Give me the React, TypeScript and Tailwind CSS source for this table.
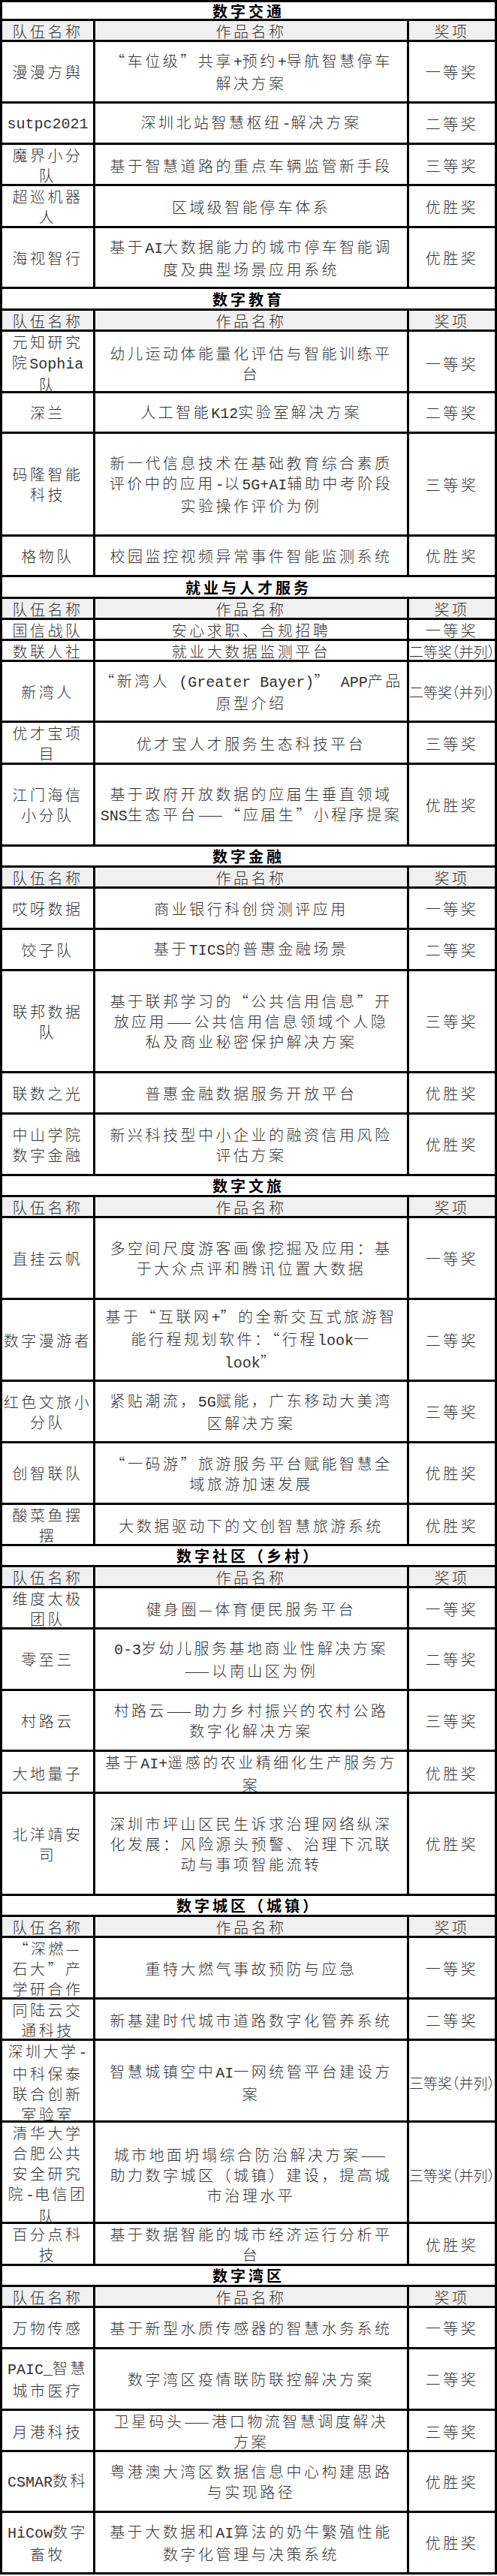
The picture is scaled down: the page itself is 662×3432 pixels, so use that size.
type Row = { team: string; work: string; award: string; h: number };
type Section = { title: string; titleH: number; rows: Row[] };

const sections: Section[] = [
  {
    title: "数字交通",
    titleH: 25,
    rows: [
      { team: "漫漫方舆", work: "“车位级”共享+预约+导航智慧停车\n解决方案", award: "一等奖", h: 82 },
      { team: "sutpc2021", work: "深圳北站智慧枢纽-解决方案", award: "二等奖", h: 55 },
      { team: "魔界小分\n队", work: "基于智慧道路的重点车辆监管新手段", award: "三等奖", h: 55 },
      { team: "超巡机器\n人", work: "区域级智能停车体系", award: "优胜奖", h: 56 },
      { team: "海视智行", work: "基于AI大数据能力的城市停车智能调\n度及典型场景应用系统", award: "优胜奖", h: 81 },
    ],
  },
  {
    title: "数字教育",
    titleH: 29,
    rows: [
      { team: "元知研究\n院Sophia\n队", work: "幼儿运动体能量化评估与智能训练平\n台", award: "一等奖", h: 82 },
      { team: "深兰", work: "人工智能K12实验室解决方案", award: "二等奖", h: 54 },
      {
        team: "码隆智能\n科技",
        work: "新一代信息技术在基础教育综合素质\n评价中的应用-以5G+AI辅助中考阶段\n实验操作评价为例",
        award: "三等奖",
        h: 137,
      },
      { team: "格物队", work: "校园监控视频异常事件智能监测系统", award: "优胜奖", h: 54 },
    ],
  },
  {
    title: "就业与人才服务",
    titleH: 29,
    rows: [
      { team: "国信战队", work: "安心求职、合规招聘", award: "一等奖", h: 28 },
      { team: "数联人社", work: "就业大数据监测平台", award: "二等奖（并列）", h: 28 },
      { team: "新湾人", work: "“新湾人 (Greater Bayer)” APP产品\n原型介绍", award: "二等奖（并列）", h: 81 },
      { team: "优才宝项\n目", work: "优才宝人才服务生态科技平台", award: "三等奖", h: 56 },
      {
        team: "江门海信\n小分队",
        work: "基于政府开放数据的应届生垂直领域\nSNS生态平台——“应届生”小程序提案",
        award: "优胜奖",
        h: 109,
      },
    ],
  },
  {
    title: "数字金融",
    titleH: 28,
    rows: [
      { team: "哎呀数据", work: "商业银行科创贷测评应用", award: "一等奖", h: 55 },
      { team: "饺子队", work: "基于TICS的普惠金融场景", award: "二等奖", h: 55 },
      {
        team: "联邦数据\n队",
        work: "基于联邦学习的“公共信用信息”开\n放应用——公共信用信息领域个人隐\n私及商业秘密保护解决方案",
        award: "三等奖",
        h: 136,
      },
      { team: "联数之光", work: "普惠金融数据服务开放平台", award: "优胜奖", h: 55 },
      { team: "中山学院\n数字金融", work: "新兴科技型中小企业的融资信用风险\n评估方案", award: "优胜奖", h: 82 },
    ],
  },
  {
    title: "数字文旅",
    titleH: 28,
    rows: [
      { team: "直挂云帆", work: "多空间尺度游客画像挖掘及应用：基\n于大众点评和腾讯位置大数据", award: "一等奖", h: 109 },
      {
        team: "数字漫游者",
        work: "基于“互联网+”的全新交互式旅游智\n能行程规划软件：“行程look一\nlook”",
        award: "二等奖",
        h: 109,
      },
      { team: "红色文旅小\n分队", work: "紧贴潮流，5G赋能，广东移动大美湾\n区解决方案", award: "三等奖", h: 82 },
      { team: "创智联队", work: "“一码游”旅游服务平台赋能智慧全\n域旅游加速发展", award: "优胜奖", h: 82 },
      { team: "酸菜鱼摆\n摆", work: "大数据驱动下的文创智慧旅游系统", award: "优胜奖", h: 55 },
    ],
  },
  {
    title: "数字社区（乡村）",
    titleH: 28,
    rows: [
      { team: "维度太极\n团队", work: "健身圈—体育便民服务平台", award: "一等奖", h: 55 },
      { team: "零至三", work: "0-3岁幼儿服务基地商业性解决方案\n——以南山区为例", award: "二等奖", h: 82 },
      { team: "村路云", work: "村路云——助力乡村振兴的农村公路\n数字化解决方案", award: "三等奖", h: 81 },
      { team: "大地量子", work: "基于AI+遥感的农业精细化生产服务方\n案", award: "优胜奖", h: 56 },
      {
        team: "北洋靖安\n司",
        work: "深圳市坪山区民生诉求治理网络纵深\n化发展：风险源头预警、治理下沉联\n动与事项智能流转",
        award: "优胜奖",
        h: 136,
      },
    ],
  },
  {
    title: "数字城区（城镇）",
    titleH: 28,
    rows: [
      { team: "“深燃—\n石大”产\n学研合作", work: "重特大燃气事故预防与应急", award: "一等奖", h: 82 },
      { team: "同陆云交\n通科技", work: "新基建时代城市道路数字化管养系统", award: "二等奖", h: 55 },
      {
        team: "深圳大学-\n中科保泰\n联合创新\n室验室",
        work: "智慧城镇空中AI一网统管平台建设方\n案",
        award: "三等奖（并列）",
        h: 109,
      },
      {
        team: "清华大学\n合肥公共\n安全研究\n院-电信团\n队",
        work: "城市地面坍塌综合防治解决方案——\n助力数字城区（城镇）建设，提高城\n市治理水平",
        award: "三等奖（并列）",
        h: 135,
      },
      { team: "百分点科\n技", work: "基于数据智能的城市经济运行分析平\n台", award: "优胜奖", h: 56 },
    ],
  },
  {
    title: "数字湾区",
    titleH: 28,
    rows: [
      { team: "万物传感", work: "基于新型水质传感器的智慧水务系统", award: "一等奖", h: 55 },
      { team: "PAIC_智慧\n城市医疗", work: "数字湾区疫情联防联控解决方案", award: "二等奖", h: 82 },
      { team: "月港科技", work: "卫星码头——港口物流智慧调度解决\n方案", award: "三等奖", h: 55 },
      { team: "CSMAR数科", work: "粤港澳大湾区数据信息中心构建思路\n与实现路径", award: "优胜奖", h: 81 },
      { team: "HiCow数字\n畜牧", work: "基于大数据和AI算法的奶牛繁殖性能\n数字化管理与决策系统", award: "优胜奖", h: 82 },
    ],
  },
];

// latin runs get the narrow mono face, like the fangsong latin in the source doc
function Txt({ s }: { s: string }) {
  const parts = s.split(/([A-Za-z0-9_+\-() ]+)/);
  return (
    <div>
      {parts.map((p, i) =>
        /[A-Za-z0-9_+\-()]/.test(p) ? (
          <span key={i} className="font-['Liberation_Mono',monospace] tracking-normal">
            {p}
          </span>
        ) : (
          p
        ),
      )}
    </div>
  );
}

const cell = "flex items-center justify-center text-center whitespace-pre";

function Cells({ team, work, award, h, head }: Row & { head?: boolean }) {
  const tie = award.includes("（");
  return (
    <div
      className={`grid grid-cols-[121px_421px_1fr] border-b-[3px] border-black ${head ? "bg-[#f0f0f0]" : ""}`}
      style={{ height: h }}
    >
      <div className={cell}>
        <Txt s={team} />
      </div>
      <div className={`${cell} border-x-[3px] border-black`}>
        <Txt s={work} />
      </div>
      <div
        className={`${cell} ${tie ? "text-[19px] tracking-normal [font-feature-settings:'halt']" : ""}`}
      >
        {award}
      </div>
    </div>
  );
}

export default function App() {
  return (
    <div className="w-[662px] bg-white">
      <div className="border-x-[3px] border-t-[3px] border-black font-['Noto_Sans_CJK_SC',sans-serif] font-light text-[20px] leading-[27px] tracking-[3.5px] text-[#333]">
        {sections.map((s) => (
          <div key={s.title}>
            <div
              className="flex items-center justify-center border-b-[3px] border-black font-bold tracking-[4px] text-black"
              style={{ height: s.titleH }}
            >
              {s.title}
            </div>
            <Cells team="队伍名称" work="作品名称" award="奖项" h={28} head />
            {s.rows.map((r) => (
              <Cells key={r.team} {...r} />
            ))}
          </div>
        ))}
      </div>
    </div>
  );
}
